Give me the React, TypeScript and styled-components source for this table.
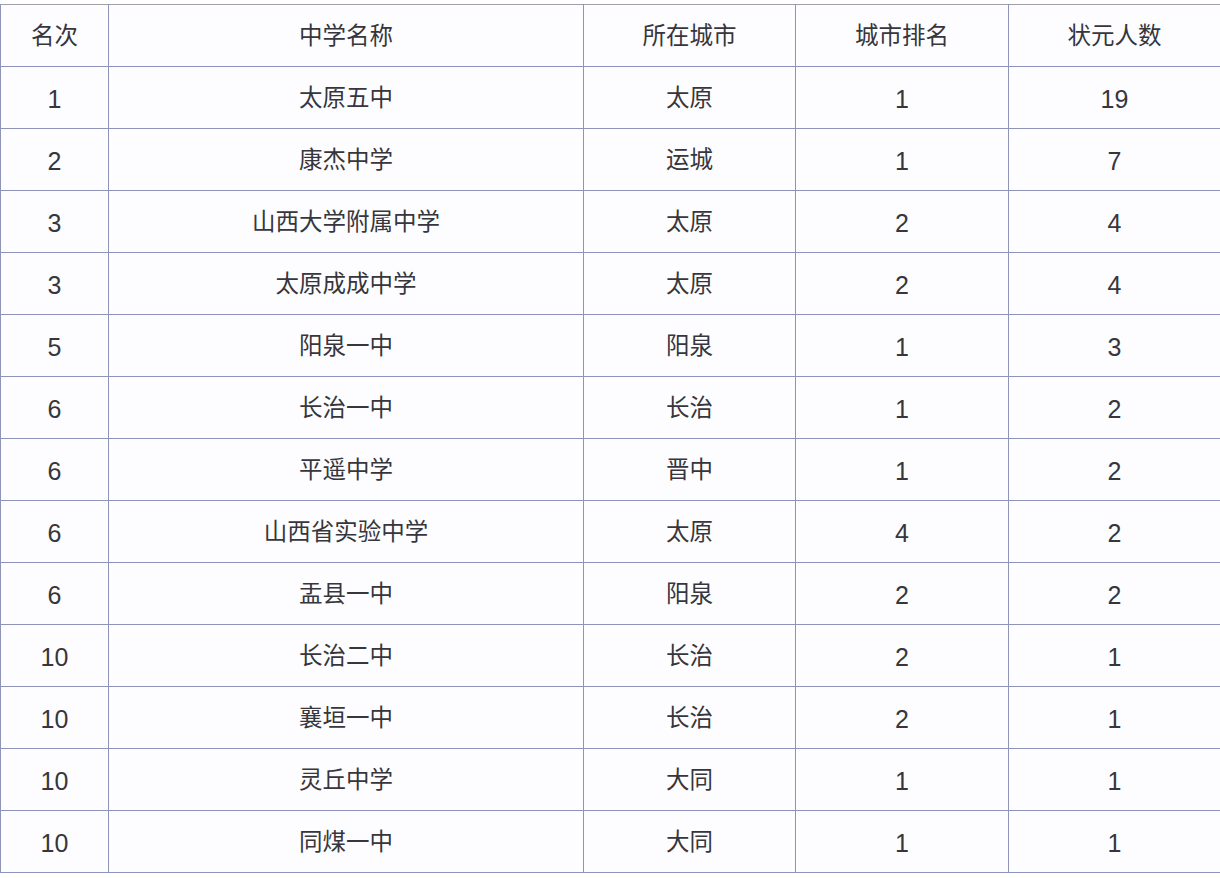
import React from "react";
import styled, { createGlobalStyle } from "styled-components";

const Global = createGlobalStyle`
  html, body { margin: 0; padding: 0; background: #ffffff; }
  body { font-family: "Liberation Sans", "Noto Sans CJK SC", sans-serif; }
`;

const Page = styled.div`
  padding-top: 4px;
  width: 1220px;
`;

const Table = styled.table`
  border-collapse: collapse;
  table-layout: fixed;
  width: 1220px;
  background: #fdfdff;
`;

const Col = styled.col<{ $w: number }>`
  width: ${(p) => p.$w}px;
`;

const Cell = styled.td<{ $num?: boolean }>`
  height: 58px;
  padding: 3px 0 0;
  border: 1px solid #8e93b9;
  text-align: center;
  vertical-align: middle;
  font-size: ${(p) => (p.$num ? "25px" : "23.5px")};
  color: #36363c;
  font-family: "Liberation Sans", "Noto Sans CJK SC", sans-serif;
  font-weight: 400;
  line-height: 1;
`;

const HeadCell = styled(Cell).attrs({ as: "th" })`
  font-weight: 400;
  border-top-color: #a09ea8;
`;

const headers = ["名次", "中学名称", "所在城市", "城市排名", "状元人数"];

const rows: [string, string, string, string, string][] = [
  ["1", "太原五中", "太原", "1", "19"],
  ["2", "康杰中学", "运城", "1", "7"],
  ["3", "山西大学附属中学", "太原", "2", "4"],
  ["3", "太原成成中学", "太原", "2", "4"],
  ["5", "阳泉一中", "阳泉", "1", "3"],
  ["6", "长治一中", "长治", "1", "2"],
  ["6", "平遥中学", "晋中", "1", "2"],
  ["6", "山西省实验中学", "太原", "4", "2"],
  ["6", "盂县一中", "阳泉", "2", "2"],
  ["10", "长治二中", "长治", "2", "1"],
  ["10", "襄垣一中", "长治", "2", "1"],
  ["10", "灵丘中学", "大同", "1", "1"],
  ["10", "同煤一中", "大同", "1", "1"],
];

const widths = [108, 475, 212, 213, 212];
const numeric = [true, false, false, true, true];

export default function App() {
  return (
    <>
      <Global />
      <Page>
        <Table>
          <colgroup>
            {widths.map((w, i) => (
              <Col key={i} $w={w} />
            ))}
          </colgroup>
          <thead>
            <tr>
              {headers.map((h) => (
                <HeadCell key={h}>{h}</HeadCell>
              ))}
            </tr>
          </thead>
          <tbody>
            {rows.map((r, i) => (
              <tr key={i}>
                {r.map((c, j) => (
                  <Cell key={j} $num={numeric[j]}>
                    {c}
                  </Cell>
                ))}
              </tr>
            ))}
          </tbody>
        </Table>
      </Page>
    </>
  );
}
